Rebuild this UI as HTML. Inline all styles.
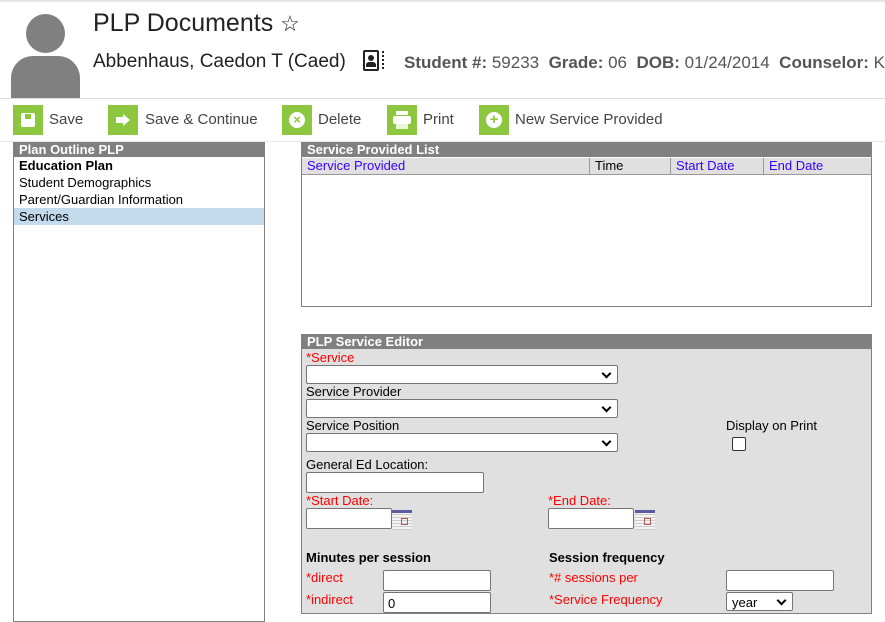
<!DOCTYPE html>
<html><head><style>
*{margin:0;padding:0;box-sizing:border-box}
body{width:885px;height:622px;overflow:hidden;background:#fff;font-family:"Liberation Sans",Arial,sans-serif;position:relative}
.a{position:absolute}
.t{font-size:13px;color:#000}
.r{color:#f00}
.hd{background:#808080;color:#fff;font-weight:bold;font-size:13px;padding-left:5px;line-height:15px}
.btn{width:30px;height:30px;background:#8dc63f;top:105px}
.bl{top:111px;font-size:15px;color:#444}
.sel{background:#fff;border:1px solid #767676;border-radius:2px;height:19px}
.sel:after{content:"";position:absolute;right:7px;top:4px;width:5px;height:5px;border-right:2px solid #000;border-bottom:2px solid #000;transform:rotate(45deg)}
.in{background:#fff;border:1px solid #767676;border-radius:2px;height:21px}
.cal{width:20px;height:20px;background:repeating-linear-gradient(0deg,#ccc 0 1px,#f4f4f4 1px 3px);border-top:3px solid #5a5aa0}
.cal:after{content:"";position:absolute;right:4px;top:5px;width:5px;height:5px;border:1px solid #b55}
</style></head><body>
<div class="a" style="left:0;top:0;width:885px;height:3px;background:linear-gradient(#ddd,#fff)"></div>
<div class="a" style="left:11px;top:12px;width:69px;height:86px;overflow:hidden">
<div class="a" style="left:15px;top:2px;width:39px;height:39px;border-radius:50%;background:#808080"></div>
<div class="a" style="left:0;top:44px;width:69px;height:60px;border-radius:22px 22px 0 0;background:#808080"></div>
</div>
<div class="a" style="left:93px;top:9px;font-size:25px;color:#222">PLP Documents <span style="font-size:22px">☆</span></div>
<div class="a" style="left:93px;top:51px;font-size:19px;color:#222;white-space:nowrap">Abbenhaus, Caedon T (Caed)</div>
<div class="a" style="left:363px;top:50px;width:16px;height:21px;border:2px solid #222;border-radius:2px"><div class="a" style="left:3px;top:3px;width:6px;height:6px;border-radius:50%;background:#222"></div><div class="a" style="left:1px;top:10px;width:10px;height:5px;background:#222;border-radius:3px 3px 0 0"></div></div>
<div class="a" style="left:382px;top:51px;width:2px;height:18px;border-left:2px dotted #222"></div>
<div class="a" style="left:404px;top:53px;font-size:17px;color:#555;white-space:nowrap"><b>Student #:</b> 59233&nbsp; <b>Grade:</b> 06&nbsp; <b>DOB:</b> 01/24/2014&nbsp; <b>Counselor:</b> Ka</div>
<div class="a" style="left:0;top:98px;width:885px;height:1px;background:#ddd"></div>
<div class="a btn" style="left:13px"><div class="a" style="left:8px;top:8px;width:14px;height:14px;background:#fff;border-radius:2px"><div class="a" style="left:4px;top:1px;width:6px;height:5px;background:#8dc63f"></div></div></div>
<div class="a bl" style="left:49px">Save</div>
<div class="a btn" style="left:108px"><div class="a" style="left:8px;top:12px;width:7px;height:6px;background:#fff"></div><div class="a" style="left:15px;top:9px;border-left:7px solid #fff;border-top:6px solid transparent;border-bottom:6px solid transparent"></div></div>
<div class="a bl" style="left:145px">Save &amp; Continue</div>
<div class="a btn" style="left:282px"><div class="a" style="left:7px;top:7px;width:16px;height:16px;border-radius:50%;background:#fff;color:#8dc63f;font-size:13px;font-weight:bold;text-align:center;line-height:16px">×</div></div>
<div class="a bl" style="left:318px">Delete</div>
<div class="a btn" style="left:387px"><div class="a" style="left:9px;top:6px;width:12px;height:4px;background:#fff"></div><div class="a" style="left:6px;top:11px;width:18px;height:8px;background:#fff;border-radius:2px"></div><div class="a" style="left:9px;top:19px;width:12px;height:5px;background:#e8f5d8"></div></div>
<div class="a bl" style="left:423px">Print</div>
<div class="a btn" style="left:479px"><div class="a" style="left:7px;top:7px;width:16px;height:16px;border-radius:50%;background:#fff;color:#8dc63f;font-size:15px;font-weight:bold;text-align:center;line-height:16px">+</div></div>
<div class="a bl" style="left:515px">New Service Provided</div>
<div class="a" style="left:0;top:141px;width:885px;height:1px;background:#e6e6e6"></div>
<div class="a" style="left:13px;top:142px;width:252px;height:480px;border:1px solid #808080;border-top:0">
<div class="hd">Plan Outline PLP</div>
<div class="t" style="padding-left:5px;line-height:17px;font-weight:bold">Education Plan</div>
<div class="t" style="padding-left:5px;line-height:17px">Student Demographics</div>
<div class="t" style="padding-left:5px;line-height:17px">Parent/Guardian Information</div>
<div class="t" style="padding-left:5px;line-height:17px;background:#c3d9ec">Services</div>
</div>
<div class="a" style="left:301px;top:142px;width:571px;height:165px;border:1px solid #808080;border-top:0">
<div class="hd">Service Provided List</div>
<div class="a t" style="left:0;top:16px;width:569px;height:17px;background:#e0e0e0;border-bottom:1px solid #999;line-height:16px;color:#3300ff">
<span class="a" style="left:5px">Service Provided</span>
<span class="a" style="left:287px;border-left:1px solid #999;padding-left:5px;color:#000">Time</span>
<span class="a" style="left:368px;border-left:1px solid #999;padding-left:5px">Start Date</span>
<span class="a" style="left:461px;border-left:1px solid #999;padding-left:5px">End Date</span>
</div></div>
<div class="a" style="left:301px;top:334px;width:571px;height:280px;border:1px solid #808080;border-top:0;background:#e0e0e0">
<div class="hd">PLP Service Editor</div></div>
<div class="a t r" style="left:306px;top:350px">*Service</div>
<div class="a sel" style="left:306px;top:365px;width:312px"></div>
<div class="a t" style="left:306px;top:384px">Service Provider</div>
<div class="a sel" style="left:306px;top:399px;width:312px"></div>
<div class="a t" style="left:306px;top:418px">Service Position</div>
<div class="a sel" style="left:306px;top:433px;width:312px"></div>
<div class="a t" style="left:726px;top:418px">Display on Print</div>
<div class="a" style="left:732px;top:437px;width:14px;height:14px;border:1px solid #333;border-radius:2px;background:#fff"></div>
<div class="a t" style="left:306px;top:457px">General Ed Location:</div>
<div class="a in" style="left:306px;top:472px;width:178px"></div>
<div class="a t r" style="left:306px;top:493px">*Start Date:</div>
<div class="a in" style="left:306px;top:508px;width:86px"></div>
<div class="a cal" style="left:392px;top:510px"></div>
<div class="a t r" style="left:548px;top:493px">*End Date:</div>
<div class="a in" style="left:548px;top:508px;width:86px"></div>
<div class="a cal" style="left:635px;top:510px"></div>
<div class="a t" style="left:306px;top:550px;font-weight:bold">Minutes per session</div>
<div class="a t" style="left:549px;top:550px;font-weight:bold">Session frequency</div>
<div class="a t r" style="left:306px;top:570px">*direct</div>
<div class="a in" style="left:383px;top:570px;width:108px"></div>
<div class="a t r" style="left:306px;top:592px">*indirect</div>
<div class="a in t" style="left:383px;top:592px;width:108px;padding:3px 0 0 4px">0</div>
<div class="a t r" style="left:549px;top:570px">*# sessions per</div>
<div class="a in" style="left:726px;top:570px;width:108px"></div>
<div class="a t r" style="left:549px;top:592px">*Service Frequency</div>
<div class="a sel t" style="left:726px;top:592px;width:67px;padding:2px 0 0 5px">year</div>
</body></html>
